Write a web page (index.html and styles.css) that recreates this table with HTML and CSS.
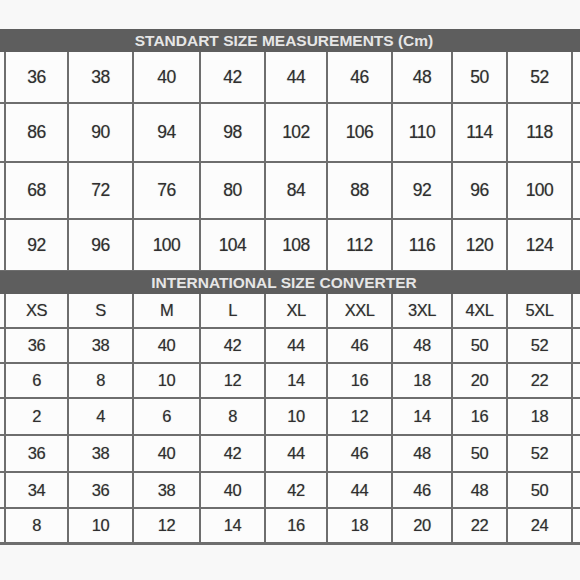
FILE: index.html
```html
<!DOCTYPE html>
<html>
<head>
<meta charset="utf-8">
<link rel="stylesheet" href="styles.css">
</head>
<body>
<div class="chart">
  <div class="band">STANDART SIZE MEASUREMENTS (Cm)</div>
  <div class="grid g1">
    <div class="c"></div><div class="c">36</div><div class="c">38</div><div class="c">40</div><div class="c">42</div><div class="c">44</div><div class="c">46</div><div class="c">48</div><div class="c">50</div><div class="c">52</div><div class="c"></div>
    <div class="c"></div><div class="c">86</div><div class="c">90</div><div class="c">94</div><div class="c">98</div><div class="c">102</div><div class="c">106</div><div class="c">110</div><div class="c">114</div><div class="c">118</div><div class="c"></div>
    <div class="c"></div><div class="c">68</div><div class="c">72</div><div class="c">76</div><div class="c">80</div><div class="c">84</div><div class="c">88</div><div class="c">92</div><div class="c">96</div><div class="c">100</div><div class="c"></div>
    <div class="c"></div><div class="c">92</div><div class="c">96</div><div class="c">100</div><div class="c">104</div><div class="c">108</div><div class="c">112</div><div class="c">116</div><div class="c">120</div><div class="c">124</div><div class="c"></div>
  </div>
  <div class="band">INTERNATIONAL SIZE CONVERTER</div>
  <div class="grid g2">
    <div class="c"></div><div class="c">XS</div><div class="c">S</div><div class="c">M</div><div class="c">L</div><div class="c">XL</div><div class="c">XXL</div><div class="c">3XL</div><div class="c">4XL</div><div class="c">5XL</div><div class="c"></div>
    <div class="c"></div><div class="c">36</div><div class="c">38</div><div class="c">40</div><div class="c">42</div><div class="c">44</div><div class="c">46</div><div class="c">48</div><div class="c">50</div><div class="c">52</div><div class="c"></div>
    <div class="c"></div><div class="c">6</div><div class="c">8</div><div class="c">10</div><div class="c">12</div><div class="c">14</div><div class="c">16</div><div class="c">18</div><div class="c">20</div><div class="c">22</div><div class="c"></div>
    <div class="c"></div><div class="c">2</div><div class="c">4</div><div class="c">6</div><div class="c">8</div><div class="c">10</div><div class="c">12</div><div class="c">14</div><div class="c">16</div><div class="c">18</div><div class="c"></div>
    <div class="c"></div><div class="c">36</div><div class="c">38</div><div class="c">40</div><div class="c">42</div><div class="c">44</div><div class="c">46</div><div class="c">48</div><div class="c">50</div><div class="c">52</div><div class="c"></div>
    <div class="c"></div><div class="c">34</div><div class="c">36</div><div class="c">38</div><div class="c">40</div><div class="c">42</div><div class="c">44</div><div class="c">46</div><div class="c">48</div><div class="c">50</div><div class="c"></div>
    <div class="c"></div><div class="c">8</div><div class="c">10</div><div class="c">12</div><div class="c">14</div><div class="c">16</div><div class="c">18</div><div class="c">20</div><div class="c">22</div><div class="c">24</div><div class="c"></div>
  </div>
</div>
</body>
</html>
```
FILE: styles.css
```css
html, body {
  margin: 0;
  padding: 0;
  background: #f8f8f8;
}
body {
  width: 580px;
  height: 580px;
  overflow: hidden;
  font-family: "Liberation Sans", Arial, sans-serif;
}
.chart {
  margin-top: 29px;
  width: 580px;
}
.band {
  height: 23px;
  padding-right: 12px;
  background: #5e5e5e;
  color: #e6e6e6;
  font-weight: bold;
  font-size: 15.5px;
  line-height: 24px;
  text-align: center;
  letter-spacing: 0;
}
.grid {
  display: grid;
  grid-template-columns: 4px 61px 63px 65px 63px 60px 63px 58px 53px 63px 7px;
  column-gap: 2px;
  row-gap: 2px;
  background: #6e6e6e;
}
.g1 {
  grid-template-rows: 50px 57px 55px 50px;
  padding-bottom: 1px;
}
.g2 {
  grid-template-rows: 33px 33px 33px 35px 35px 34px 33px;
  padding-bottom: 3px;
}
.c {
  background: #fcfcfc;
  color: #2f2f2f;
  display: flex;
  align-items: center;
  justify-content: center;
  letter-spacing: -0.5px;
  text-shadow: 0 0 1px rgba(0, 0, 0, 0.35);
}
.g1 .c {
  font-size: 17.5px;
}
.g2 .c {
  font-size: 16.5px;
}
```
